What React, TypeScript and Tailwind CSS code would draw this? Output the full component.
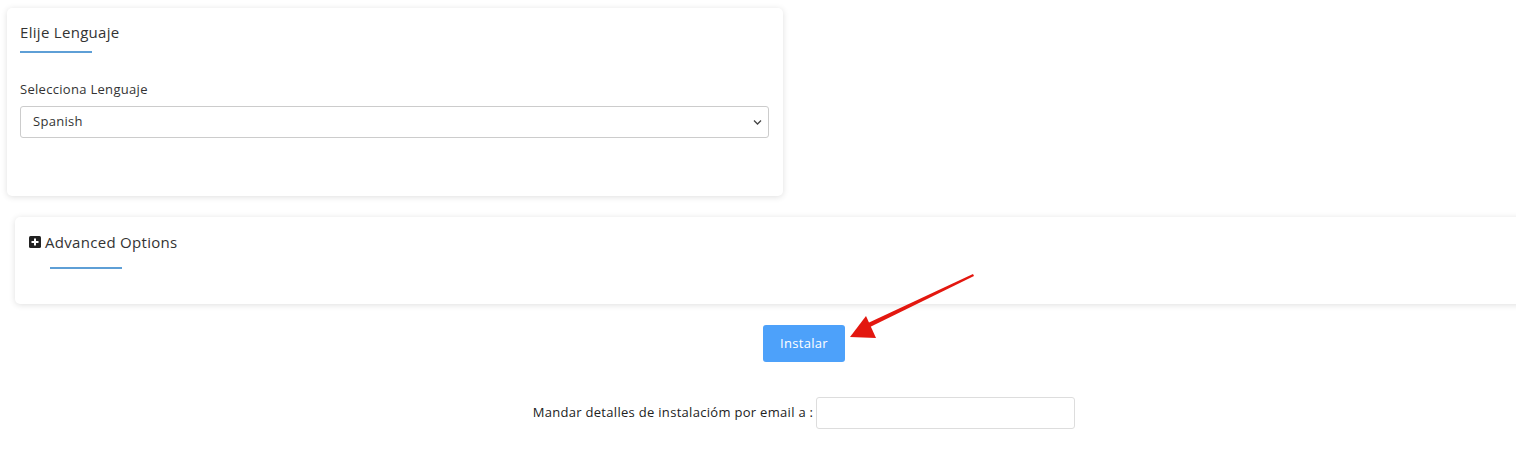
import React from "react";

export default function App() {
  const font = { fontFamily: '"Open Sans", "Noto Sans", sans-serif' };
  return (
    <div className="relative w-[1516px] h-[456px] overflow-hidden bg-white text-[#333] tracking-[0.3px]" style={font}>
      <div className="pl-[7px] pt-[8px]">
        <div className="w-[776px] h-[188px] rounded-[5px] bg-white shadow-[0_1px_6px_rgba(0,0,0,0.13)] px-[13px] pt-[14px]">
          <div className="text-[15px] leading-[20px] text-[#333]">Elije Lenguaje</div>
          <div className="mt-[9px] h-[1.5px] w-[72px] bg-[#5e9fd6]" />
          <div className="mt-[27px] text-[13px] leading-[18px] text-[#333]">Selecciona Lenguaje</div>
          <div className="mt-[8px] relative h-[32px] w-[749px] rounded-[3px] border border-[#ccc] bg-white flex items-center pl-[12px] text-[13px] text-[#333]">
            Spanish
            <svg className="absolute right-[6px] top-[12px]" width="9" height="7" viewBox="0 0 9 7">
              <path d="M1 1.5 L4.5 5 L8 1.5" fill="none" stroke="#444" strokeWidth="1.3" />
            </svg>
          </div>
        </div>
      </div>

      <div className="ml-[15px] w-[1578px]">
        <div className="mt-[21px] h-[87px] rounded-[5px] bg-white shadow-[0_1px_6px_rgba(0,0,0,0.13)] pl-[14px] pt-[15px]">
          <div className="flex items-center gap-[4px] text-[15px] leading-[20px] text-[#333]">
            <svg width="12" height="12" viewBox="0 0 12 12">
              <rect x="0" y="0" width="12" height="12" rx="1.5" fill="#222" />
              <path d="M6 2.5 V9.5 M2.5 6 H9.5" stroke="#fff" strokeWidth="2" />
            </svg>
            <span>Advanced Options</span>
          </div>
          <div className="ml-[21px] mt-[15px] h-[1.5px] w-[72px] bg-[#5e9fd6]" />
        </div>

        <div className="mt-[21px] flex justify-center">
          <button className="h-[37px] w-[82px] rounded-[3px] bg-[#4da1fa] text-white text-[13px] tracking-[0.3px]">Instalar</button>
        </div>

        <div className="mt-[35px] flex justify-center items-center gap-[3px]">
          <span className="text-[13px] text-[#222]">Mandar detalles de instalacióm por email a :</span>
          <input className="h-[32px] w-[259px] rounded-[3px] border border-[#ddd] bg-white outline-none" />
        </div>
      </div>

      <svg className="absolute left-0 top-0 pointer-events-none" width="1516" height="456">
        <polygon points="973,274 974,276 870,327 868,323" fill="#e3170f" />
        <polygon points="850,337 866,316 876,338" fill="#e3170f" />
      </svg>
    </div>
  );
}
